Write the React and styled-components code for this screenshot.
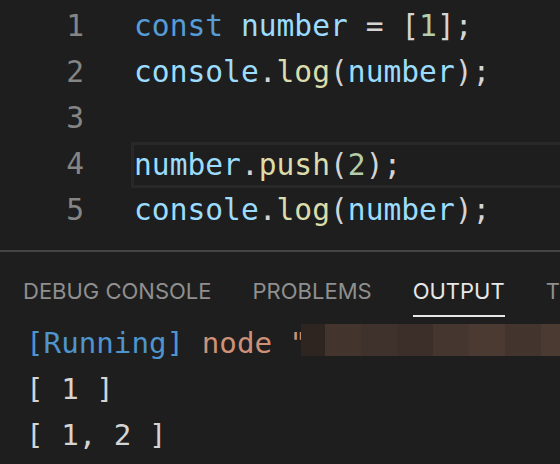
import React from "react"
import styled, { createGlobalStyle } from "styled-components"

const GlobalStyle = createGlobalStyle`
  html, body {
    margin: 0;
    padding: 0;
    background: #1e1e1e;
  }
`

const Page = styled.div`
  width: 560px;
  height: 464px;
  overflow: hidden;
  background: #1e1e1e;
  display: flex;
  flex-direction: column;
`

const Editor = styled.div`
  height: 252px;
  padding-top: 3px;
  box-sizing: border-box;
  border-bottom: 2px solid #444444;
  font-family: "DejaVu Sans Mono", monospace;
  font-size: 29.6px;
`

const Line = styled.div`
  display: grid;
  grid-template-columns: 84px 1fr;
  column-gap: 48px;
  height: 46px;
  align-items: center;
`

const LineNo = styled.span`
  color: #858585;
  text-align: right;
`

const Code = styled.div`
  height: 100%;
  display: flex;
  align-items: center;
  white-space: pre;
  box-sizing: border-box;
  border: ${(p) => (p.current ? "3px solid #282828" : "none")};
  border-right: none;
  margin-top: ${(p) => (p.current ? "2px" : "0")};
  padding-left: ${(p) => (p.current ? "0" : "2px")};
  margin-left: ${(p) => (p.current ? "-1px" : "0")};
`

const T = styled.span`
  color: ${(p) => p.c};
`

const Panel = styled.div`
  flex: 1;
  display: flex;
  flex-direction: column;
`

const Tabs = styled.div`
  display: flex;
  gap: 41px;
  padding: 25px 0 0 23px;
  height: 66px;
  box-sizing: border-box;
  font-family: Inter, "Open Sans", sans-serif;
  font-size: 22px;
  white-space: nowrap;
`

const Tab = styled.div`
  color: ${(p) => (p.active ? "#e7e7e7" : "#8f8f8f")};
  height: 40px;
  box-sizing: border-box;
  line-height: 28px;
  border-bottom: 2px solid ${(p) => (p.active ? "#e7e7e7" : "transparent")};
`

const Output = styled.div`
  padding: 2px 0 0 26px;
  font-family: "DejaVu Sans Mono", monospace;
  font-size: 29.2px;
  color: #d4d4d4;
`

const OutLine = styled.div`
  height: 46px;
  display: flex;
  align-items: center;
  white-space: pre;
`

const Redacted = styled.span`
  display: flex;
  align-self: flex-start;
  margin-top: 4px;
  height: 32px;
  margin-left: -6px;
`

const Block = styled.span`
  display: block;
  width: ${(p) => p.w}px;
  background: ${(p) => p.c};
`

const blocks = [
  ["#2e2521", 24],
  ["#43352e", 36],
  ["#3f312b", 36],
  ["#3c2e29", 36],
  ["#45362f", 36],
  ["#4a3a32", 36],
  ["#43342d", 36],
  ["#4a3a32", 30],
]

const kw = "#569cd6"
const v = "#9cdcfe"
const fn = "#dcdcaa"
const num = "#b5cea8"
const pu = "#d4d4d4"

const App = () => (
  <Page>
    <GlobalStyle />
    <Editor>
      <Line>
        <LineNo>1</LineNo>
        <Code>
          <span>
            <T c={kw}>const</T> <T c={v}>number</T> <T c={pu}>= [</T>
            <T c={num}>1</T>
            <T c={pu}>];</T>
          </span>
        </Code>
      </Line>
      <Line>
        <LineNo>2</LineNo>
        <Code>
          <span>
            <T c={v}>console</T>
            <T c={pu}>.</T>
            <T c={fn}>log</T>
            <T c={pu}>(</T>
            <T c={v}>number</T>
            <T c={pu}>);</T>
          </span>
        </Code>
      </Line>
      <Line>
        <LineNo>3</LineNo>
        <Code />
      </Line>
      <Line>
        <LineNo>4</LineNo>
        <Code current>
          <span>
            <T c={v}>number</T>
            <T c={pu}>.</T>
            <T c={fn}>push</T>
            <T c={pu}>(</T>
            <T c={num}>2</T>
            <T c={pu}>);</T>
          </span>
        </Code>
      </Line>
      <Line>
        <LineNo>5</LineNo>
        <Code>
          <span>
            <T c={v}>console</T>
            <T c={pu}>.</T>
            <T c={fn}>log</T>
            <T c={pu}>(</T>
            <T c={v}>number</T>
            <T c={pu}>);</T>
          </span>
        </Code>
      </Line>
    </Editor>
    <Panel>
      <Tabs>
        <Tab>DEBUG CONSOLE</Tab>
        <Tab>PROBLEMS</Tab>
        <Tab active>OUTPUT</Tab>
        <Tab>TERMINAL</Tab>
      </Tabs>
      <Output>
        <OutLine>
          <span>
            <T c="#4e94ce">[Running]</T> <T c="#ce9178">node "</T>
          </span>
          <Redacted>
            {blocks.map(([c, w], i) => (
              <Block key={i} c={c} w={w} />
            ))}
          </Redacted>
        </OutLine>
        <OutLine>[ 1 ]</OutLine>
        <OutLine>[ 1, 2 ]</OutLine>
      </Output>
    </Panel>
  </Page>
)

export default App
